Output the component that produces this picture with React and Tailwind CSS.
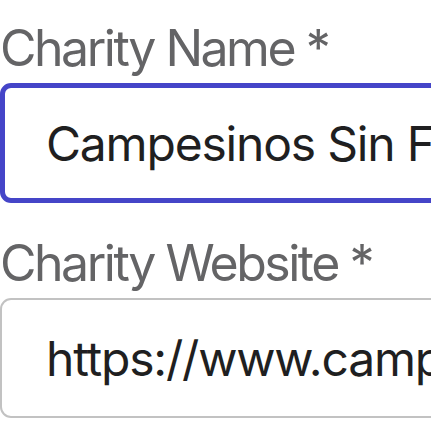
const fields = [
  { label: 'Charity Name *', value: 'Campesinos Sin Fronteras', focused: true },
  { label: 'Charity Website *', value: 'https://www.campesinossinfronteras.org' },
];

export default function App() {
  return (
    <div className="w-[431px] h-[431px] overflow-hidden bg-white font-['Inter','Noto_Sans',sans-serif]">
      <form className="w-[640px] pt-[18px] flex flex-col gap-[30px]">
        {fields.map((f) => (
          <div key={f.label} className="flex flex-col gap-[5px]">
            <label className="text-[50px] leading-[60px] text-[#646466] tracking-[-2.5px]">{f.label}</label>
            <input
              readOnly
              value={f.value}
              className={`h-[120px] w-full rounded-[11px] bg-white text-[48px] tracking-[-1.2px] text-[#1f1f21] outline-none ${
                f.focused ? 'border-[5px] border-[#4545c8] pl-[41px]' : 'border-2 border-[#c2c2c2] pl-[44px]'
              }`}
            />
          </div>
        ))}
      </form>
    </div>
  );
}
